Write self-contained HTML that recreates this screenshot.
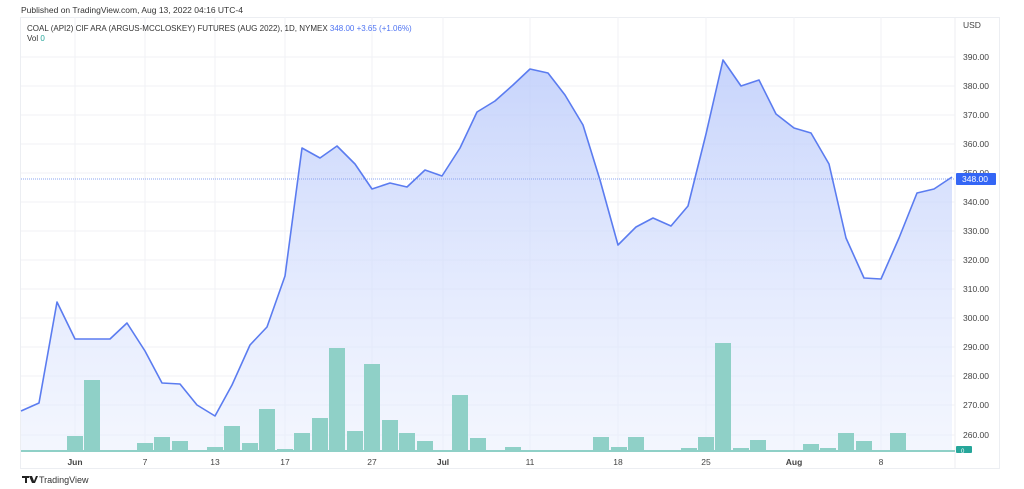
<!DOCTYPE html>
<html><head><meta charset="utf-8"><style>
html,body{margin:0;padding:0;background:#fff;width:1024px;height:489px;overflow:hidden}
text{font-family:"Liberation Sans",sans-serif}
</style></head><body>
<svg width="1024" height="489" viewBox="0 0 1024 489" xmlns="http://www.w3.org/2000/svg">
<defs><linearGradient id="g" x1="0" y1="0" x2="0" y2="1"><stop offset="0" stop-color="#b9c9fb" stop-opacity="0.8"/><stop offset="1" stop-color="#e8eefe" stop-opacity="0.5"/></linearGradient></defs>
<text x="21" y="13" font-size="8.5" fill="#333">Published on TradingView.com, Aug 13, 2022 04:16 UTC-4</text>
<rect x="20.5" y="17.5" width="979" height="451" fill="none" stroke="#eceef2"/>
<line x1="955" y1="17" x2="955" y2="468" stroke="#eceef2"/>
<g stroke="#f0f2f5" stroke-width="1">
<line x1="21" y1="57" x2="955" y2="57"/><line x1="21" y1="86" x2="955" y2="86"/><line x1="21" y1="115" x2="955" y2="115"/><line x1="21" y1="144" x2="955" y2="144"/><line x1="21" y1="173" x2="955" y2="173"/><line x1="21" y1="202" x2="955" y2="202"/><line x1="21" y1="231" x2="955" y2="231"/><line x1="21" y1="260" x2="955" y2="260"/><line x1="21" y1="289" x2="955" y2="289"/><line x1="21" y1="318" x2="955" y2="318"/><line x1="21" y1="347" x2="955" y2="347"/><line x1="21" y1="376" x2="955" y2="376"/><line x1="21" y1="405" x2="955" y2="405"/><line x1="21" y1="435" x2="955" y2="435"/>
<line x1="75" y1="17" x2="75" y2="452"/><line x1="145" y1="17" x2="145" y2="452"/><line x1="215" y1="17" x2="215" y2="452"/><line x1="285" y1="17" x2="285" y2="452"/><line x1="372" y1="17" x2="372" y2="452"/><line x1="443" y1="17" x2="443" y2="452"/><line x1="530" y1="17" x2="530" y2="452"/><line x1="618" y1="17" x2="618" y2="452"/><line x1="706" y1="17" x2="706" y2="452"/><line x1="794" y1="17" x2="794" y2="452"/><line x1="881" y1="17" x2="881" y2="452"/>
</g>
<path d="M21,411 L39,403 L57,302 L75,339 L92,339 L110,339 L127,323 L145,351 L162,383 L180,384 L197,405 L215,416 L232,385 L250,345 L267,327 L285,276 L302,148 L320,158 L337,146 L355,164 L372,189 L390,183 L407,187 L425,170 L442,176 L460,148 L477,112 L495,101 L513,85 L530,69 L548,73 L565,95 L583,125 L600,180 L618,245 L636,227 L653,218 L671,226 L688,206 L706,134 L723,60 L741,86 L759,80 L776,114 L794,128 L811,133 L829,164 L846,238 L864,278 L881,279 L899,238 L917,193 L934,189 L952,177 L952,452 L21,452 Z" fill="url(#g)"/>
<line x1="21" y1="179" x2="955" y2="179" stroke="#8aa4f0" stroke-width="1" stroke-dasharray="1,1"/>
<g fill="#8fd0c7">
<rect x="21" y="450" width="934" height="2"/>
<rect x="67" y="436" width="16" height="16"/><rect x="84" y="380" width="16" height="72"/>
<rect x="137" y="443" width="16" height="9"/><rect x="154" y="437" width="16" height="15"/><rect x="172" y="441" width="16" height="11"/>
<rect x="207" y="447" width="16" height="5"/><rect x="224" y="426" width="16" height="26"/><rect x="242" y="443" width="16" height="9"/><rect x="259" y="409" width="16" height="43"/><rect x="277" y="449" width="16" height="3"/>
<rect x="294" y="433" width="16" height="19"/><rect x="312" y="418" width="16" height="34"/><rect x="329" y="348" width="16" height="104"/><rect x="347" y="431" width="16" height="21"/><rect x="364" y="364" width="16" height="88"/><rect x="382" y="420" width="16" height="32"/><rect x="399" y="433" width="16" height="19"/><rect x="417" y="441" width="16" height="11"/>
<rect x="452" y="395" width="16" height="57"/><rect x="470" y="438" width="16" height="14"/><rect x="505" y="447" width="16" height="5"/>
<rect x="593" y="437" width="16" height="15"/><rect x="611" y="447" width="16" height="5"/><rect x="628" y="437" width="16" height="15"/>
<rect x="681" y="448" width="16" height="4"/><rect x="698" y="437" width="16" height="15"/><rect x="715" y="343" width="16" height="109"/><rect x="733" y="448" width="16" height="4"/><rect x="750" y="440" width="16" height="12"/>
<rect x="803" y="444" width="16" height="8"/><rect x="820" y="448" width="16" height="4"/><rect x="838" y="433" width="16" height="19"/><rect x="856" y="441" width="16" height="11"/><rect x="890" y="433" width="16" height="19"/>
</g>
<polyline points="21,411 39,403 57,302 75,339 92,339 110,339 127,323 145,351 162,383 180,384 197,405 215,416 232,385 250,345 267,327 285,276 302,148 320,158 337,146 355,164 372,189 390,183 407,187 425,170 442,176 460,148 477,112 495,101 513,85 530,69 548,73 565,95 583,125 600,180 618,245 636,227 653,218 671,226 688,206 706,134 723,60 741,86 759,80 776,114 794,128 811,133 829,164 846,238 864,278 881,279 899,238 917,193 934,189 952,177" fill="none" stroke="#5b7cf0" stroke-width="1.6" stroke-linejoin="round"/>
<text x="27" y="31" font-size="8" fill="#333">COAL (API2) CIF ARA (ARGUS-MCCLOSKEY) FUTURES (AUG 2022), 1D, NYMEX <tspan fill="#4f74f2">348.00  +3.65 (+1.06%)</tspan></text>
<text x="27" y="41" font-size="8" fill="#333">Vol <tspan fill="#26a69a">0</tspan></text>
<g font-size="8.5" fill="#444">
<text x="963" y="28">USD</text>
<text x="963" y="60">390.00</text><text x="963" y="89">380.00</text><text x="963" y="118">370.00</text><text x="963" y="147">360.00</text><text x="963" y="176">350.00</text><text x="963" y="205">340.00</text><text x="963" y="234">330.00</text><text x="963" y="263">320.00</text><text x="963" y="292">310.00</text><text x="963" y="321">300.00</text><text x="963" y="350">290.00</text><text x="963" y="379">280.00</text><text x="963" y="408">270.00</text><text x="963" y="438">260.00</text>
</g>
<rect x="956" y="173" width="40" height="12" rx="1" fill="#3466f5"/>
<text x="962" y="182" font-size="8.5" fill="#fff">348.00</text>
<rect x="956" y="446" width="16" height="7" rx="1" fill="#26a69a"/>
<text x="961" y="453" font-size="6" fill="#fff">0</text>
<g font-size="8.5" fill="#444" text-anchor="middle">
<text x="75" y="465" font-weight="bold">Jun</text><text x="145" y="465">7</text><text x="215" y="465">13</text><text x="285" y="465">17</text><text x="372" y="465">27</text><text x="443" y="465" font-weight="bold">Jul</text><text x="530" y="465">11</text><text x="618" y="465">18</text><text x="706" y="465">25</text><text x="794" y="465" font-weight="bold">Aug</text><text x="881" y="465">8</text>
</g>
<path d="M22,476 h7 v2 h-2 v5 h-2 v-5 h-3z M29,476 h3 l2,5 l2,-5 h2 l-3,7 h-3z" fill="#222"/>
<text x="39" y="483" font-size="9" fill="#333">TradingView</text>
</svg>
</body></html>
